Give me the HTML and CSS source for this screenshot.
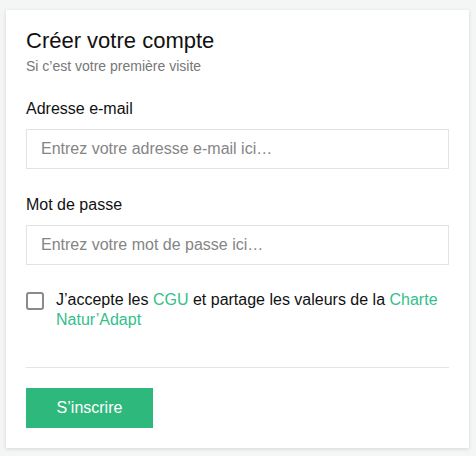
FILE: index.html
```html
<!DOCTYPE html>
<html lang="fr">
<head>
<meta charset="utf-8">
<title>Créer votre compte</title>
<link rel="stylesheet" href="styles.css">
</head>
<body>
<div class="card">
  <h1 class="title">Créer votre compte</h1>
  <p class="subtitle">Si c’est votre première visite</p>
  <form class="form">
    <div class="field">
      <label class="label" for="email">Adresse e-mail</label>
      <input class="input" id="email" type="email" placeholder="Entrez votre adresse e-mail ici…">
    </div>
    <div class="field">
      <label class="label" for="pwd">Mot de passe</label>
      <input class="input" id="pwd" type="password" placeholder="Entrez votre mot de passe ici…">
    </div>
    <label class="check">
      <input class="box" type="checkbox">
      <span class="check-text">J’accepte les <a class="link" href="#">CGU</a> et partage les valeurs de la <a class="link" href="#">Charte Natur’Adapt</a></span>
    </label>
    <hr class="divider">
    <button class="btn" type="button">S’inscrire</button>
  </form>
</div>
</body>
</html>
```
FILE: styles.css
```css
* { box-sizing: border-box; }
html, body { margin: 0; }
body {
  background: #f4f5f5;
  padding: 10px 7px 8px 6px;
  font-family: "Liberation Sans", Arial, sans-serif;
  color: #111;
}
.card {
  width: 463px;
  background: #fff;
  box-shadow: 0 1px 4px rgba(0,0,0,0.13);
  padding: 18px 20px 20px;
}
.title {
  margin: 0;
  font-size: 22px;
  line-height: 26px;
  font-weight: normal;
  color: #111;
}
.subtitle {
  margin: 3px 0 0;
  font-size: 14px;
  line-height: 18px;
  color: #777;
}
.form {
  margin-top: 24px;
  display: flex;
  flex-direction: column;
}
.field { display: flex; flex-direction: column; }
.field + .field { margin-top: 26px; }
.label {
  font-size: 16px;
  line-height: 20px;
  margin-bottom: 10px;
  color: #111;
}
.input {
  width: 100%;
  height: 40px;
  border: 1px solid #e3e3e3;
  border-radius: 0;
  padding: 0 14px;
  font-family: inherit;
  font-size: 16px;
  color: #333;
  outline: none;
}
.input::placeholder { color: #858585; }
.check {
  margin-top: 25px;
  display: flex;
  align-items: flex-start;
  gap: 12px;
}
.box {
  appearance: none;
  -webkit-appearance: none;
  margin: 2px 0 0;
  flex: none;
  width: 18px;
  height: 18px;
  border: 2px solid #8a8a8a;
  border-radius: 3px;
  background: #fff;
}
.check-text {
  display: block;
  font-size: 16px;
  line-height: 20px;
  color: #111;
}
.link { color: #33c08a; text-decoration: none; }
.divider {
  margin: 37px 0 0;
  border: 0;
  border-top: 1px solid #e4e4e4;
  height: 0;
}
.btn {
  margin-top: 20px;
  align-self: flex-start;
  width: 127px;
  height: 40px;
  padding: 0;
  border: 0;
  border-radius: 0;
  background: #2fb87b;
  color: #fff;
  font-family: inherit;
  font-size: 16px;
}
```
